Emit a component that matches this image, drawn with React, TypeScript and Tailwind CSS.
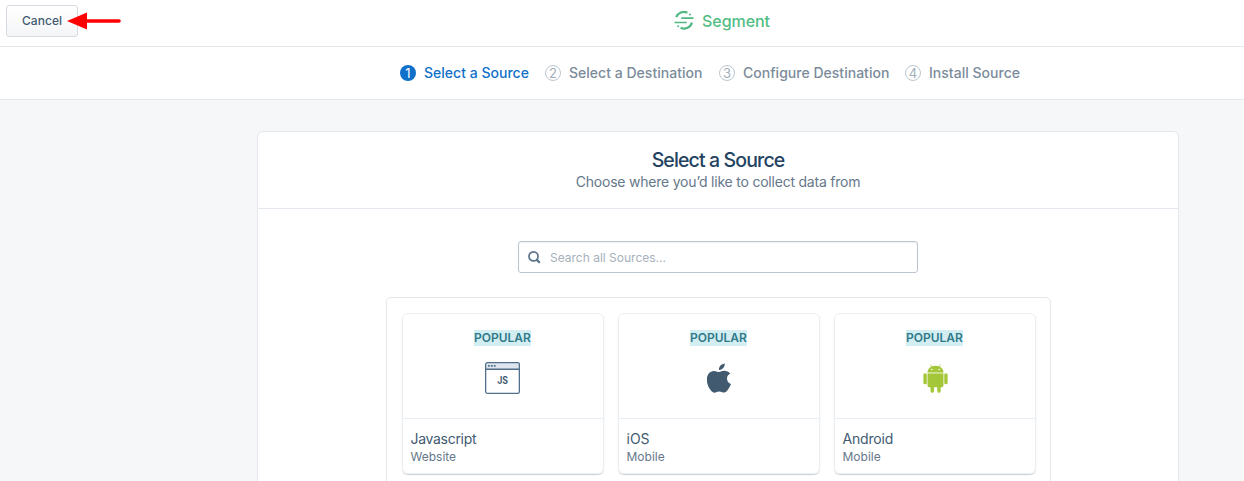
import React from "react";

function SegmentLogo() {
  return (
    <svg width="20" height="20" viewBox="0 0 20 20" fill="none" stroke="#52b882">
      <path d="M2.300 6.200A8 8 0 0 1 13.400 1.800" strokeWidth="2.200" />
      <path d="M17.900 11.500A8 8 0 0 1 6.600 16.800" strokeWidth="2.200" />
      <path d="M7.300 7.200H19.500M.6 11.500H12.700" strokeWidth="1.700" />
      <circle cx="15.900" cy="3.400" r="1" fill="#52b882" stroke="none" />
      <circle cx="4.200" cy="15.300" r="1" fill="#52b882" stroke="none" />
    </svg>
  );
}

function JavascriptIcon() {
  return (
    <svg width="35" height="32" viewBox="0 0 35 32" fontFamily="Inter, sans-serif">
      <rect x=".75" y=".75" width="33.5" height="30.5" rx="1.5" fill="#fff" />
      <path d="M1 7V2.2Q1 1 2.2 1H32.8Q34 1 34 2.2V7Z" fill="#dfe5ee" />
      <path d="M1 7.2H34" stroke="#526f8c" strokeWidth="1.4" />
      <rect x=".65" y=".65" width="33.7" height="30.7" rx="1.6" fill="none" stroke="#526f8c" strokeWidth="1.3" />
      <path d="M3 3.1h1.8v1.6H3zM5.9 3.1h1.8v1.6H5.9zM8.8 3.1h1.8v1.6H8.8z" fill="#526f8c" />
      <text x="12.2" y="22" fontSize="10" fontWeight="700" fill="#425a70" textLength="10.8" lengthAdjust="spacingAndGlyphs">JS</text>
    </svg>
  );
}

function AppleIcon() {
  return (
    <svg className="ml-px" width="24" height="30" viewBox="0 0 24 30" fill="#425a70">
      <path d="M17.700 .4c.2 1.700-.5 3.300-1.500 4.500-1 1.200-2.600 2.100-4.200 2-.2-1.600.6-3.300 1.500-4.300C14.600 1.400 16.300.5 17.700.4Z" />
      <path d="M23.200 10.400c-1.900 1.100-3.200 2.600-3.200 5 0 2.700 1.600 4.700 4 5.600-.6 1.800-1.500 3.500-2.600 5.100-1.200 1.800-2.500 3.500-4.500 3.500-1.900 0-2.500-1.100-4.800-1.100-2.200 0-2.900 1.100-4.700 1.200-1.900.1-3.400-1.800-4.600-3.600C.3 22.500-1.500 15.900 1.100 11.500c1.200-2.200 3.500-3.600 5.900-3.600 1.900 0 3.600 1.200 4.800 1.200 1.100 0 3.200-1.500 5.500-1.300 2.300.1 4.500.9 5.900 2.600Z" />
    </svg>
  );
}

function AndroidIcon() {
  return (
    <svg className="ml-px" width="25" height="29" viewBox="0 0 26 29" preserveAspectRatio="none" fill="#a4c639">
      <path d="M8 .7 9.300 2.700M18 .7 16.700 2.700" stroke="#a4c639" strokeWidth=".7" strokeLinecap="round" />
      <path d="M4.700 8.600C4.700 4.500 8.100 1.700 13 1.700s8.300 2.800 8.300 6.900Z" />
      <circle cx="9.200" cy="5.500" r=".8" fill="#fff" />
      <circle cx="16.800" cy="5.500" r=".8" fill="#fff" />
      <path d="M4.700 8.600h16.600v1.200H4.700z" fill="#c8dd84" />
      <path d="M4.700 9.800h16.600v11.700q0 1.800-1.800 1.800h-1.100v3.800a1.800 1.800 0 0 1-3.600 0v-3.800h-3.400v3.800a1.800 1.800 0 0 1-3.600 0v-3.800H6.500q-1.800 0-1.800-1.800Z" />
      <rect x=".4" y="9.300" width="3.500" height="11" rx="1.600" />
      <rect x="22.100" y="9.300" width="3.500" height="11" rx="1.600" />
    </svg>
  );
}

const steps = [
  { label: "Select a Source", width: "w-[145px]" },
  { label: "Select a Destination", width: "w-[174px]" },
  { label: "Configure Destination", width: "w-[186px]" },
  { label: "Install Source", width: "w-[116px]" },
];

const sources = [
  { name: "Javascript", kind: "Website", tracking: "tracking-[-0.3px]", icon: <JavascriptIcon /> },
  { name: "iOS", kind: "Mobile", tracking: "tracking-normal", icon: <AppleIcon /> },
  { name: "Android", kind: "Mobile", tracking: "tracking-[-0.2px]", icon: <AndroidIcon /> },
];

export default function App() {
  return (
    <div className="flex h-[481px] w-[1244px] flex-col overflow-hidden bg-[#f6f7f9] font-['Inter','Liberation_Sans',sans-serif] antialiased">
      <header className="grid h-[47px] shrink-0 grid-cols-[674px_1fr] border-b border-[#e4e7eb] bg-white">
        <div className="flex items-start pt-[5px] pl-[6px]">
          <button className="h-8 w-[72px] rounded-[3px] border border-[#d5dae0] bg-linear-to-b from-white to-[#f4f5f7] text-[12px] font-medium tracking-[0.05px] text-[#425a70]">
            Cancel
          </button>
          <svg className="-ml-[11px] mt-[7px]" width="55" height="18" viewBox="0 0 55 18">
            <path d="M0 9 20 .5V17.500Z" fill="#f00" />
            <path d="M18 9H52" stroke="#f00" strokeWidth="3.600" strokeLinecap="round" />
          </svg>
        </div>
        <div className="flex h-[42px] items-center gap-2 text-[#52bd85]">
          <SegmentLogo />
          <span className="text-[16px] font-medium tracking-[-0.05px]">Segment</span>
        </div>
      </header>
      <nav className="flex h-[53px] shrink-0 items-center border-b border-[#e4e7eb] bg-white pl-[400px]">
        {steps.map((step, i) => (
          <div key={step.label} className={`flex items-center gap-2 whitespace-nowrap ${step.width}`}>
            <span
              className={`flex size-4 shrink-0 items-center justify-center rounded-full text-[13px] leading-none ${
                i === 0 ? "bg-[#1070ca] text-white" : "border border-[#bdc7d0] text-[#a1adb9]"
              }`}
            >
              {i + 1}
            </span>
            <span className={`text-[14px] leading-5 font-medium tracking-[0.02px] ${i === 0 ? "text-[#1070ca]" : "text-[#7b8b9a]"}`}>
              {step.label}
            </span>
          </div>
        ))}
      </nav>
      <main className="ml-[257px] mt-[31px] h-[400px] w-[922px] shrink-0 rounded-t-[6px] border border-[#e4e7eb] bg-white">
        <div className="flex h-[77px] flex-col items-center border-b border-[#e4e9f0] pt-4">
          <h1 className="text-[19.5px] leading-6 font-medium tracking-[-0.87px] text-[#234361]">Select a Source</h1>
          <p className="text-[14px] leading-5 tracking-[-0.22px] text-[#66788a]">Choose where you’d like to collect data from</p>
        </div>
        <div className="flex flex-col items-center pt-8">
          <label className="flex h-8 w-[400px] items-center rounded-[3px] border border-[#bbc5cf] pl-[9px] shadow-[inset_0_1px_1px_rgba(67,90,111,0.08)]">
            <svg width="13" height="13" viewBox="0 0 13 13" fill="none" stroke="#5b738b">
              <circle cx="5.500" cy="5.400" r="4.500" strokeWidth="1.700" />
              <path d="M8.900 8.900 11.200 11.200" strokeWidth="2.200" strokeLinecap="round" />
            </svg>
            <input
              className="ml-[9px] w-[340px] bg-transparent pt-0.5 text-[12px] outline-none placeholder:text-[#a6b1bb]"
              placeholder="Search all Sources..."
            />
          </label>
          <section className="mt-6 flex h-[240px] w-[665px] gap-[14px] rounded-[5px] border border-[#e4e7eb] px-[15px] pt-[15px]">
            {sources.map((source) => (
              <article
                key={source.name}
                className="flex h-[161px] w-[202px] shrink-0 flex-col rounded-[6px] border border-[#edf0f2] shadow-[0_1px_1px_rgba(67,90,111,0.28)]"
              >
                <div className="flex h-[105px] shrink-0 flex-col items-center border-b border-[#e8edf3] pt-4">
                  <span className="h-4 bg-[#d2eef3] text-[12px] leading-4 font-semibold text-[#317a89]">POPULAR</span>
                  <div className="mt-4 flex h-8 items-center justify-center">{source.icon}</div>
                </div>
                <div className="pt-[10px] pl-2">
                  <div className={`text-[14px] leading-5 text-[#425a70] ${source.tracking}`}>{source.name}</div>
                  <div className="text-[12px] leading-4 text-[#66788a]">{source.kind}</div>
                </div>
              </article>
            ))}
          </section>
        </div>
      </main>
    </div>
  );
}
